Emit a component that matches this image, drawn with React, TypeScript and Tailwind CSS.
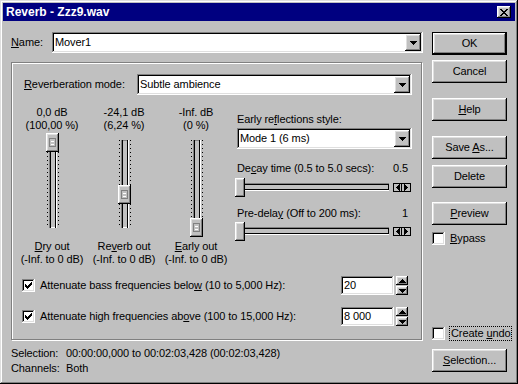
import type { ReactNode } from "react";

const raised =
  "bg-[#c0c0c0] shadow-[inset_-1px_-1px_#000,inset_1px_1px_#fff,inset_-2px_-2px_#808080,inset_2px_2px_#dfdfdf]";
const sunken =
  "bg-white shadow-[inset_-1px_-1px_#fff,inset_1px_1px_#808080,inset_-2px_-2px_#dfdfdf,inset_2px_2px_#000]";

function Down() {
  return (
    <svg width="7" height="4" viewBox="0 0 7 4" shapeRendering="crispEdges">
      <path d="M0 0h7v1H0zM1 1h5v1H1zM2 2h3v1H2zM3 3h1v1H3z" fill="#000" />
    </svg>
  );
}

function Combo({ value, className }: { value: string; className: string }) {
  return (
    <div className={`flex h-[21px] items-center p-[2px] ${sunken} ${className}`}>
      <span className="flex-1 truncate pl-[1px]">{value}</span>
      <span className={`flex h-[17px] w-[16px] items-center justify-center ${raised}`}>
        <Down />
      </span>
    </div>
  );
}

function Btn({ children, def, className = "" }: { children: ReactNode; def?: boolean; className?: string }) {
  const look = def
    ? "bg-[#c0c0c0] shadow-[inset_0_0_0_1px_#000,inset_-2px_-2px_#000,inset_2px_2px_#fff,inset_-3px_-3px_#808080,inset_3px_3px_#dfdfdf]"
    : raised;
  return (
    <div className={`flex h-[23px] w-[75px] items-center justify-center ${look} ${className}`}>
      <span>{children}</span>
    </div>
  );
}

function Check({ on }: { on?: boolean }) {
  return (
    <span className={`flex h-[13px] w-[13px] shrink-0 items-center justify-center ${sunken}`}>
      {on && (
        <svg width="7" height="7" viewBox="0 0 7 7" shapeRendering="crispEdges">
          <path d="M6 0h1v3H6zM5 1h1v3H5zM4 2h1v3H4zM3 3h1v3H3zM2 4h1v3H2zM1 3h1v3H1zM0 2h1v3H0z" fill="#000" />
        </svg>
      )}
    </span>
  );
}

function Tri({ dir }: { dir: "up" | "down" | "left" | "right" }) {
  const d = {
    up: "M3 0h1v1H3zM2 1h3v1H2zM1 2h5v1H1zM0 3h7v1H0z",
    down: "M0 0h7v1H0zM1 1h5v1H1zM2 2h3v1H2zM3 3h1v1H3z",
    left: "M3 0h1v7H3zM2 1h1v5H2zM1 2h1v3H1zM0 3h1v1H0z",
    right: "M0 0h1v7H0zM1 1h1v5H1zM2 2h1v3H2zM3 3h1v1H3z",
  }[dir];
  const horiz = dir === "left" || dir === "right";
  return (
    <svg width={horiz ? 4 : 7} height={horiz ? 7 : 4} viewBox={horiz ? "0 0 4 7" : "0 0 7 4"} shapeRendering="crispEdges">
      <path d={d} fill="#000" />
    </svg>
  );
}

const ticks =
  "bg-[repeating-linear-gradient(to_bottom,#000_0,#000_1px,transparent_1px,transparent_4px)]";

function VSlider({ top }: { top: number }) {
  return (
    <div className="relative mx-auto h-[108px] w-[13px]">
      <div className={`absolute left-[1px] top-[8px] h-[88px] w-px ${ticks}`} />
      <div className={`absolute right-0 top-[8px] h-[88px] w-px ${ticks}`} />
      <div className="absolute left-[3px] top-[8px] h-[88px] w-[8px] bg-[#c0c0c0] shadow-[inset_1px_0_#808080,inset_2px_0_#000,inset_-1px_0_#fff,inset_-2px_0_#000,inset_0_1px_#808080,inset_0_-1px_#fff]" />
      <div className={`absolute left-0 flex h-[19px] w-[13px] items-center justify-center ${raised}`} style={{ top }}>
        <div className="flex h-[9px] w-[7px] flex-col justify-center gap-[2px] border border-[#808080] px-[1px]">
          <div className="h-px bg-white" />
          <div className="h-px bg-white" />
        </div>
      </div>
    </div>
  );
}

function HSlider() {
  return (
    <div className="flex h-[19px] items-center">
      <div className="relative h-[19px] w-[154px]">
        <div className="absolute left-0 right-0 top-[5px] h-[8px] bg-[#c0c0c0] shadow-[inset_0_1px_#808080,inset_0_2px_#000,inset_0_-1px_#fff,inset_0_-2px_#000,inset_1px_0_#808080,inset_-1px_0_#000]" />
        <div className={`absolute left-0 top-0 h-[19px] w-[10px] ${raised}`} />
      </div>
      <div className="ml-[4px] flex">
        <span className="flex h-[9px] w-[9px] items-center justify-center border border-black bg-[#c0c0c0]">
          <Tri dir="left" />
        </span>
        <span className="flex h-[9px] w-[9px] items-center justify-center border border-l-0 border-black bg-[#c0c0c0]">
          <Tri dir="right" />
        </span>
      </div>
    </div>
  );
}

function Spin({ value }: { value: string }) {
  return (
    <div className="flex items-center">
      <div className={`flex h-[19px] w-[53px] items-center pl-[3px] ${sunken}`}>{value}</div>
      <div className="ml-[2px] flex h-[19px] w-[12px] flex-col justify-between">
        <span className={`flex h-[9px] items-center justify-center ${raised}`}>
          <Tri dir="up" />
        </span>
        <span className={`flex h-[9px] items-center justify-center ${raised}`}>
          <Tri dir="down" />
        </span>
      </div>
    </div>
  );
}

const sliders = [
  { db: "0,0 dB", pct: "(100,00 %)", top: 1, label: <><u>D</u>ry out</> },
  { db: "-24,1 dB", pct: "(6,24 %)", top: 53, label: <>Re<u>v</u>erb out</> },
  { db: "-Inf. dB", pct: "(0 %)", top: 86, label: <><u>E</u>arly out</> },
];

export default function App() {
  return (
    <div className="h-[384px] w-[518px] bg-[#c0c0c0] p-[3px] font-['Liberation_Sans',Arial,sans-serif] text-[11px] leading-[13px] tracking-[-0.1px] text-black shadow-[inset_-1px_-1px_#000,inset_1px_1px_#dfdfdf,inset_-2px_-2px_#808080,inset_2px_2px_#fff]">
      {/* title bar */}
      <div className="flex h-[18px] items-center bg-[#000080] pl-[3px] pr-[4px]">
        <span className="flex-1 text-[12px] font-bold tracking-normal text-white">Reverb - Zzz9.wav</span>
        <span className={`flex h-[12px] w-[14px] items-center justify-center ${raised}`}>
          <svg width="8" height="7" viewBox="0 0 8 7" shapeRendering="crispEdges">
            <path d="M0 0h2v1H0zM6 0h2v1H6zM1 1h2v1H1zM5 1h2v1H5zM2 2h4v1H2zM3 3h2v1H3zM2 4h4v1H2zM1 5h2v1H1zM5 5h2v1H5zM0 6h2v1H0zM6 6h2v1H6z" fill="#000" />
          </svg>
        </span>
      </div>

      <div className="flex h-[360px] pl-[8px] pr-[8px] pt-[11px]">
        {/* left column */}
        <div className="flex w-[412px] flex-col">
          <div className="flex h-[21px] items-center">
            <span className="w-[41px]">
              <u>N</u>ame:
            </span>
            <Combo value="Mover1" className="w-[371px]" />
          </div>

          <div className="mt-[9px] h-[278px] w-[411px] border border-[#808080] shadow-[inset_1px_1px_#fff,1px_1px_#fff]">
            <div className="ml-[12px] mt-[11px] flex h-[21px] items-center">
              <span className="w-[113px]">
                <u>R</u>everberation mode:
              </span>
              <Combo value="Subtle ambience" className="w-[275px]" />
            </div>

            <div className="mt-[11px] flex">
              <div className="ml-[4px] flex">
                {sliders.map((s) => (
                  <div key={s.db} className="flex w-[72px] flex-col items-center text-center">
                    <span>{s.db}</span>
                    <span>{s.pct}</span>
                    <VSlider top={s.top} />
                    <span>{s.label}</span>
                    <span>(-Inf. to 0 dB)</span>
                  </div>
                ))}
              </div>

              <div className="ml-[3px] flex w-[177px] flex-col">
                <span className="mt-[7px] pl-[2px]">
                  Early re<u>f</u>lections style:
                </span>
                <Combo value="Mode 1 (6 ms)" className="ml-[2px] mt-[2px] w-[175px]" />
                <div className="mt-[13px] flex pl-[2px] pr-[4px]">
                  <span className="flex-1">
                    De<u>c</u>ay time (0.5 to 5.0 secs):
                  </span>
                  <span>0.5</span>
                </div>
                <div className="mt-[3px]">
                  <HSlider />
                </div>
                <div className="mt-[10px] flex pl-[2px] pr-[4px]">
                  <span className="flex-1">
                    Pre-dela<u>y</u> (Off to 200 ms):
                  </span>
                  <span>1</span>
                </div>
                <div className="mt-[2px]">
                  <HSlider />
                </div>
              </div>
            </div>

            <div className="ml-[10px] mt-[10px] flex h-[19px] items-center">
              <Check on />
              <span className="ml-[5px] w-[301px]">
                Attenuate bass frequencies belo<u>w</u> (10 to 5,000 Hz):
              </span>
              <Spin value="20" />
            </div>
            <div className="ml-[10px] mt-[12px] flex h-[19px] items-center">
              <Check on />
              <span className="ml-[5px] w-[301px]">
                Attenuate high frequencies ab<u>o</u>ve (100 to 15,000 Hz):
              </span>
              <Spin value="8 000" />
            </div>
          </div>

          <div className="mt-[6px] grid grid-cols-[55px_1fr] leading-[15px]">
            <span>Selection:</span>
            <span>00:00:00,000 to 00:02:03,428 (00:02:03,428)</span>
            <span>Channels:</span>
            <span>Both</span>
          </div>
        </div>

        {/* right column */}
        <div className="ml-[9px] flex w-[75px] flex-col pb-[9px]">
          <Btn def>OK</Btn>
          <Btn className="mt-[5px]">Cancel</Btn>
          <Btn className="mt-[15px]">
            <u>H</u>elp
          </Btn>
          <Btn className="mt-[15px]">
            Save <u>A</u>s...
          </Btn>
          <Btn className="mt-[6px]">Delete</Btn>
          <Btn className="mt-[14px]">
            <u>P</u>review
          </Btn>
          <div className="mt-[7px] flex items-center">
            <Check />
            <span className="ml-[5px]">
              <u>B</u>ypass
            </span>
          </div>
          <div className="mt-auto flex items-center">
            <Check />
            <span className="ml-[4px] whitespace-nowrap border border-dotted border-black px-[1px] leading-[13px]">
              Create <u>u</u>ndo
            </span>
          </div>
          <Btn className="mt-[8px]">
            <u>S</u>election...
          </Btn>
        </div>
      </div>
    </div>
  );
}
